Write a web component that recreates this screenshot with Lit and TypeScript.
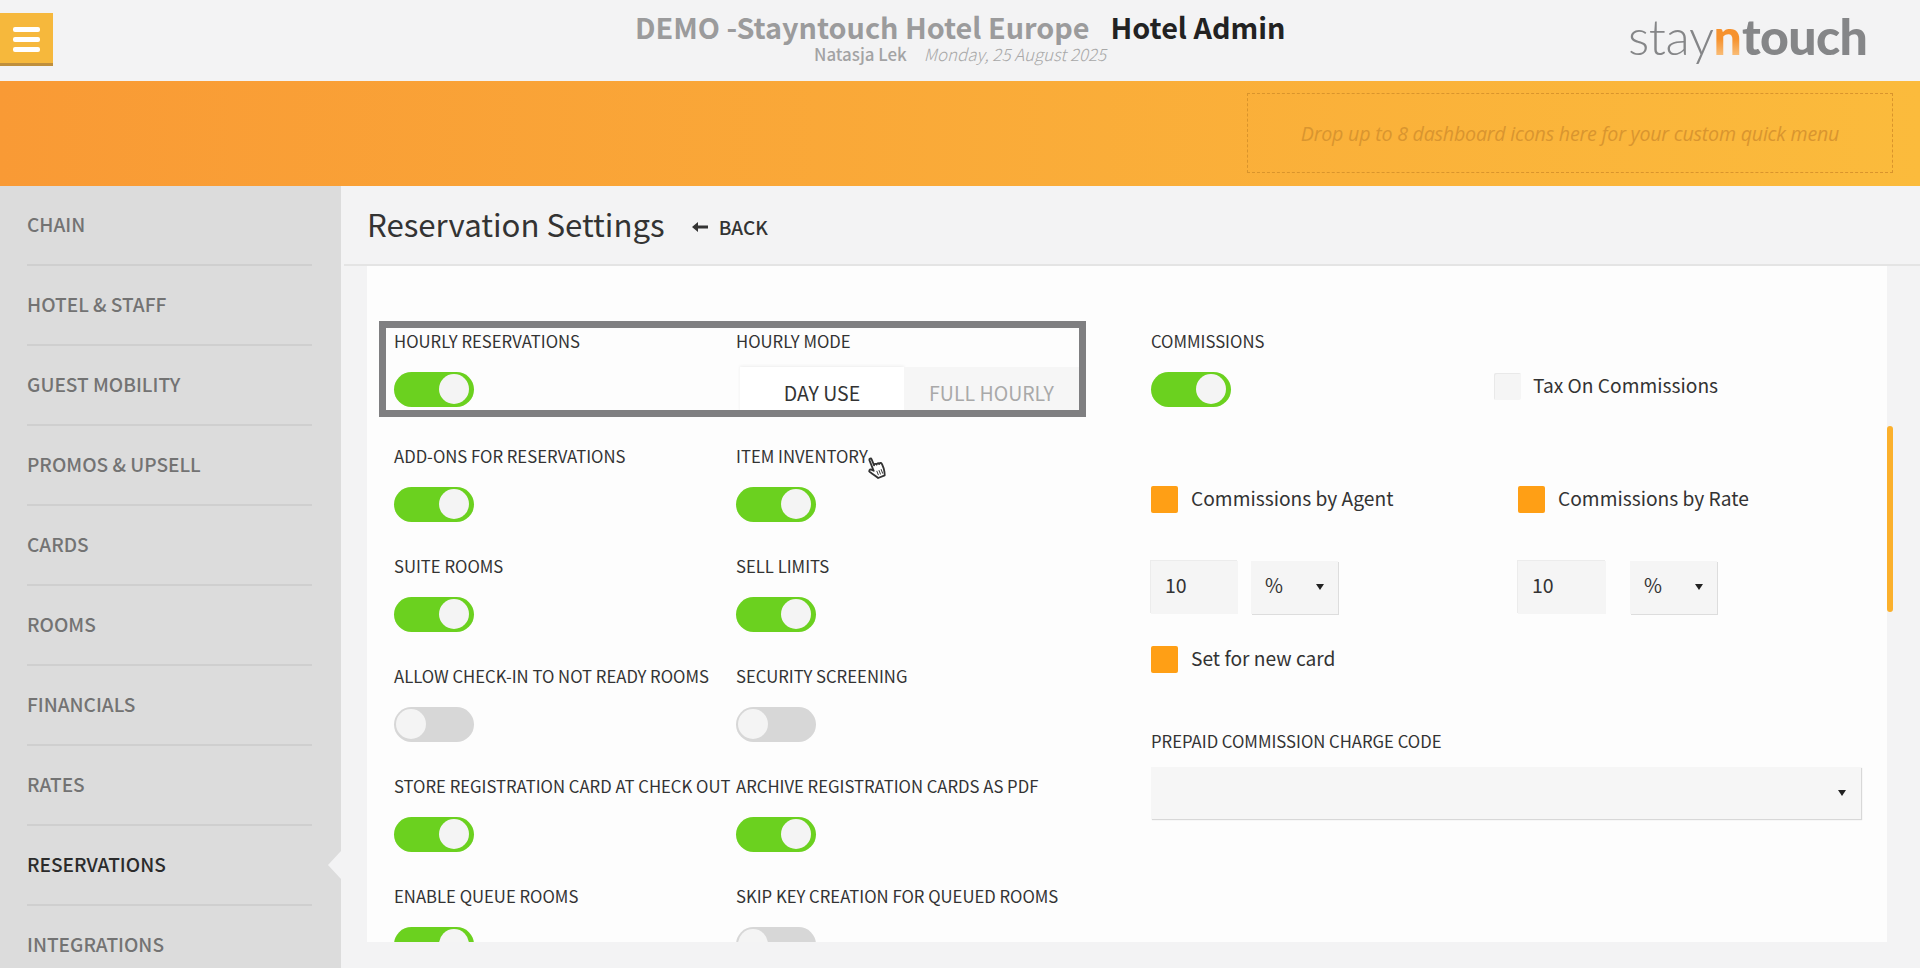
import { LitElement, html, css } from "lit";
import { customElement } from "lit/decorators.js";

const NAV = ["CHAIN","HOTEL & STAFF","GUEST MOBILITY","PROMOS & UPSELL","CARDS","ROOMS","FINANCIALS","RATES","RESERVATIONS","INTEGRATIONS"];
const ROWS: [string, boolean, string, boolean][] = [
  ["ADD-ONS FOR RESERVATIONS", true, "ITEM INVENTORY", true],
  ["SUITE ROOMS", true, "SELL LIMITS", true],
  ["ALLOW CHECK-IN TO NOT READY ROOMS", false, "SECURITY SCREENING", false],
  ["STORE REGISTRATION CARD AT CHECK OUT", true, "ARCHIVE REGISTRATION CARDS AS PDF", true],
  ["ENABLE QUEUE ROOMS", true, "SKIP KEY CREATION FOR QUEUED ROOMS", false],
];

@customElement("app-root")
export class AppRoot extends LitElement {
  static styles = css`
    :host { display: flex; flex-direction: column; height: 968px; overflow: hidden; position: relative; background: #f3f3f4; color: #333;
      font-family: "Noto Sans CJK SC", "Liberation Sans", sans-serif; }
    .header { height: 81px; flex: none; display: flex; background: #f3f3f4; position: relative; }
    .menu { position: absolute; left: 0; top: 13px; width: 53px; height: 53px; box-sizing: border-box; background: #f6b83c; border-bottom: 3px solid #bf8f3c;
      display: flex; flex-direction: column; gap: 5px; padding: 14px 13px 0; }
    .menu i { display: block; height: 5px; background: #fff; border-radius: 2px; }
    .titles { position: absolute; left: 635px; top: 9px; display: flex; flex-direction: column; }
    .t1 { display: flex; gap: 21px; font-size: 28.8px; line-height: 36px; font-weight: 700; white-space: nowrap; color: #9b9b9c; }
    .t1 b { color: #222; font-weight: 700; }
    .t2 { margin: 0 0 0 179px; display: flex; gap: 17px; font-size: 16.9px; line-height: 18px; white-space: nowrap; color: #a3a3a4; }
    .t2 b { font-weight: 500; }
    .t2 em { font-weight: 300; color: #a8a8a8; }
    .logo { position: absolute; left: 1628px; top: 3px; font-family: "Lato", sans-serif; font-size: 50px; line-height: 66px; color: #858688; white-space: nowrap; }
    .logo .s { font-weight: 300; letter-spacing: -0.4px; }
    .logo .n { font-weight: 900; background: linear-gradient(#f6922e 55%, #fbd9a8); -webkit-background-clip: text; background-clip: text; color: transparent; }
    .logo .u { font-weight: 900; letter-spacing: -0.6px; }
    .band { height: 105px; flex: none; background: linear-gradient(90deg, #f99a35, #fbbb3c); position: relative; }
    .drop { position: absolute; left: 1247px; top: 12px; width: 646px; height: 80px; box-sizing: border-box; border: 1px dashed #d9942c;
      display: flex; align-items: center; justify-content: center; font-family: "Open Sans", sans-serif; font-style: italic; font-size: 19.6px; letter-spacing: -0.2px; color: #d9952f; }
    .main { flex: 1; display: flex; min-height: 0; }
    .side { width: 341px; flex: none; background: #dcdcdc; box-sizing: border-box; padding: 0 29px 0 27px; position: relative; }
    .nav { height: 80px; box-sizing: border-box; border-bottom: 2px solid #cfcfcf; padding-top: 23px; font-size: 19.1px; line-height: 30px; font-weight: 500; color: #737373; white-space: nowrap; }
    .nav.active { color: #2b2b2b; position: relative; }
    .nav.active::after { content: ""; position: absolute; right: -29px; top: 25px; border: 14px solid transparent; border-left-width: 0; border-right: 13px solid #f3f3f4; }
    .content { flex: 1; min-width: 0; display: flex; flex-direction: column; position: relative; }
    .bar { height: 80px; flex: none; box-sizing: border-box; border-bottom: 2px solid #e4e4e4; display: flex; align-items: center; padding: 0 0 0 23px; margin-left: 3px; }
    h1 { margin: 0; font-size: 31.2px; font-weight: 400; line-height: 44px; color: #333; padding-bottom: 2px; }
    .back { display: flex; align-items: center; margin-left: 27px; gap: 10px; font-size: 19px; font-weight: 500; line-height: 30px; color: #333; padding-top: 3px; }
    .card { margin-left: 26px; width: 1520px; height: 676px; flex: none; background: #fdfdfd; overflow: hidden; display: flex; padding: 61px 0 0 27px; box-sizing: border-box; position: relative; }
    .left { width: 757px; flex: none; display: grid; grid-template-columns: 342px 342px; row-gap: 30.5px; align-content: start; }
    .label { height: 30px; line-height: 28px; font-size: 16.7px; color: #333; white-space: nowrap; }
    .toggle { display: block; width: 80px; height: 35px; border-radius: 18px; background: #6bd11f; margin-top: 14.5px; position: relative; }
    .toggle::after { content: ""; position: absolute; right: 5px; top: 2.5px; width: 30px; height: 30px; border-radius: 50%; background: #f4f4f4; }
    .toggle.off { background: #d7d7d7; }
    .toggle.off::after { right: auto; left: 2px; }
    .seg { display: flex; width: 339px; margin: 9.5px 0 0 4px; height: 45px; font-size: 19.5px; line-height: 52px; text-align: center; }
    .seg span { display: block; }
    .seg .on { width: 164px; background: #fff; color: #333; box-shadow: 0 -1px 3px #eee; }
    .seg .of { width: 175px; background: #f6f6f6; color: #a9a9a9; }
    .high { position: absolute; left: 379px; top: 321px; width: 707px; height: 96px; box-sizing: border-box; border: 7px solid #7f7f81; }
    .right { flex: none; width: 710px; }
    .r1 { display: flex; }
    .r1 > div:first-child { width: 343px; }
    .check { display: flex; align-items: center; gap: 13px; font-size: 19.2px; line-height: 25px; color: #333; white-space: nowrap; }
    .check i { display: block; width: 27px; height: 27px; margin-top: 2px; border-radius: 2px; background: #ff9f15; flex: none; }
    .check.none { margin-top: 44px; gap: 12px; align-self: flex-start; }
    .check.none i { background: #f5f5f5; box-shadow: inset 1px 1px 0 #e9e9e9; }
    .two { display: grid; grid-template-columns: 367px 300px; }
    .checks { margin-top: 77px; }
    .pair { display: flex; gap: 13px; }
    .inputs { margin-top: 48px; }
    .box { height: 53px; background: #f5f5f5; font-size: 19.5px; line-height: 48px; box-sizing: border-box; color: #333; }
    .num { width: 87px; padding-left: 14px; box-shadow: -1px -1px 0 #ececec; }
    .sel { width: 87px; padding-left: 14px; position: relative; box-shadow: 1px 1px 0 #ddd; }
    .pair.b .num { width: 88px; margin-right: 11px; }
    .arrow { position: absolute; right: 14px; top: 23px; width: 0; height: 0; border: 4px solid transparent; border-top: 6px solid #222; border-bottom: 0; }
    .newcard { margin-top: 30px; }
    .pre { margin-top: 54px; }
    .wide { width: 710px; height: 52px; background: #f6f6f6; position: relative; margin-top: 10px; box-shadow: 1px 1px 1px #d8d8d8; }
    .wide .arrow { right: 15px; top: 23px; }
    .scroll { position: absolute; left: 1546px; top: 240px; width: 6px; height: 186px; border-radius: 3px; background: #fbb02c; }
    .hand { position: absolute; left: 865px; top: 456px; width: 24px; height: 24px; }
  `;

  private toggle(on: boolean) {
    return html`<span class="toggle ${on ? "" : "off"}"></span>`;
  }

  render() {
    return html`
      <div class="header">
        <div class="menu"><i></i><i></i><i></i></div>
        <div class="titles">
          <div class="t1"><span>DEMO -Stayntouch Hotel Europe</span><b>Hotel Admin</b></div>
          <div class="t2"><b>Natasja Lek</b><em>Monday, 25 August 2025</em></div>
        </div>
        <div class="logo"><span class="s">stay</span><span class="n">n</span><span class="u">touch</span></div>
      </div>
      <div class="band"><div class="drop">Drop up to 8 dashboard icons here for your custom quick menu</div></div>
      <div class="main">
        <div class="side">
          ${NAV.map((n) => html`<div class="nav ${n === "RESERVATIONS" ? "active" : ""}">${n}</div>`)}
        </div>
        <div class="content">
          <div class="bar">
            <h1>Reservation Settings</h1>
            <div class="back">
              <svg width="17" height="12" viewBox="0 0 17 12"><path d="M0 6 L6 1 V4.5 H16 V7.5 H6 V11 Z" fill="#333"/></svg>
              BACK
            </div>
          </div>
          <div class="card">
            <div class="left">
              <div><div class="label">HOURLY RESERVATIONS</div>${this.toggle(true)}</div>
              <div>
                <div class="label">HOURLY MODE</div>
                <div class="seg"><span class="on">DAY USE</span><span class="of">FULL HOURLY</span></div>
              </div>
              ${ROWS.map((r) => html`
                <div><div class="label">${r[0]}</div>${this.toggle(r[1])}</div>
                <div><div class="label">${r[2]}</div>${this.toggle(r[3])}</div>
              `)}
            </div>
            <div class="right">
              <div class="r1">
                <div><div class="label">COMMISSIONS</div>${this.toggle(true)}</div>
                <div class="check none"><i></i>Tax On Commissions</div>
              </div>
              <div class="two checks">
                <div class="check"><i></i>Commissions by Agent</div>
                <div class="check"><i></i>Commissions by Rate</div>
              </div>
              <div class="two inputs">
                <div class="pair"><div class="box num">10</div><div class="box sel">%<span class="arrow"></span></div></div>
                <div class="pair b"><div class="box num">10</div><div class="box sel">%<span class="arrow"></span></div></div>
              </div>
              <div class="check newcard"><i></i>Set for new card</div>
              <div class="label pre">PREPAID COMMISSION CHARGE CODE</div>
              <div class="wide"><span class="arrow"></span></div>
            </div>
          </div>
          <div class="scroll"></div>
        </div>
      </div>
      <div class="high"></div>
      <svg class="hand" viewBox="0 0 21 26">
        <g transform="rotate(-22 10 13)">
          <path d="M6 2.2c0-1.6 2.6-1.6 2.6 0v7.2c.4-1.6 2.8-1.4 2.9.2.5-1.3 2.7-1.1 2.8.5.7-1.1 2.6-.8 2.7.8.1 3 .3 6-.5 8.6-.4 1.6-.9 3-1.3 4.2H7.6C6.4 21 3.8 17.6 1.6 14.4c-1-1.6 1.1-3.2 2.5-1.8L6 14.6Z" fill="#fff" stroke="#333" stroke-width="2" stroke-linejoin="round"/>
          <path d="M9 16v5M11.5 16v5M14 16v5" stroke="#333" stroke-width="1"/>
        </g>
      </svg>
    `;
  }
}
